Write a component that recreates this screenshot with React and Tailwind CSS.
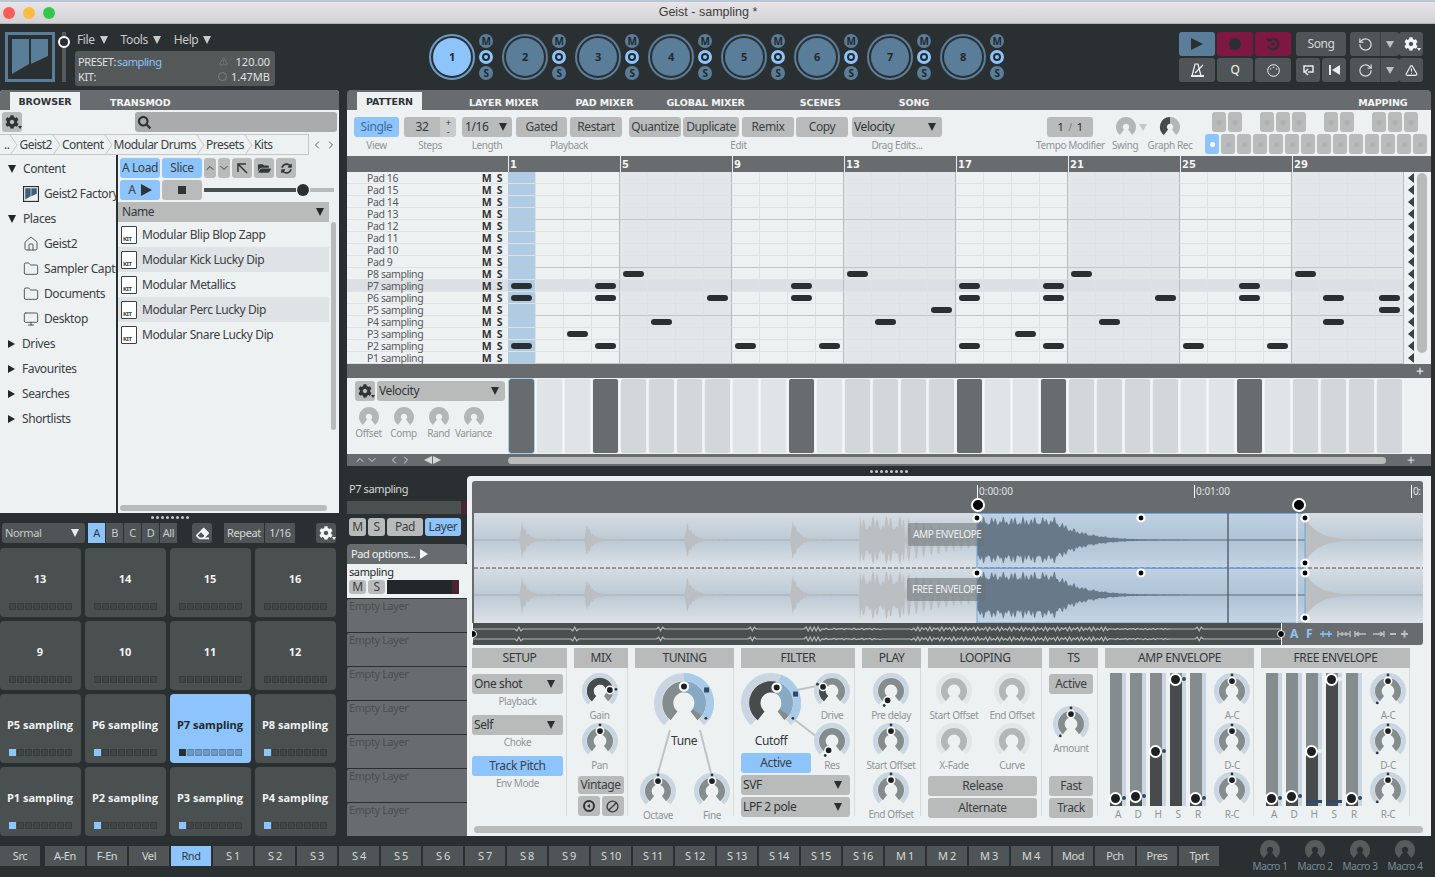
import { FaCog, FaSearch, FaFolderOpen, FaSyncAlt, FaEraser } from 'react-icons/fa';
import { RotateCcw, RotateCw, TriangleAlert, Folder, Monitor, Home, ChevronUp, ChevronDown, ChevronLeft, ChevronRight, Ban, Plus } from 'lucide-react';

const rad = (a) => ((a - 90) * Math.PI) / 180;
const pt = (c, r, a) => [c + r * Math.cos(rad(a)), c + r * Math.sin(rad(a))];
const arc = (c, r, a0, a1) => {
    const [x0, y0] = pt(c, r, a0);
    const [x1, y1] = pt(c, r, a1);
    return `M${x0} ${y0}A${r} ${r} 0 ${a1 - a0 > 180 ? 1 : 0} 1 ${x1} ${y1}`;
};

// generic rotary knob: outer ring + inner track + optional coloured parts
function Knob({ s = 36, ring = '#c9d6e2', track = '#858c8e', outer, inner, handle, dots = [], square, hr }) {
    const c = s / 2;
    const R = s / 2;
    const rOut = R * 0.87;
    const rIn = ring ? R * 0.54 : R * 0.66;
    const wOut = R * 0.26;
    const wIn = ring ? R * 0.37 : R * 0.68;
    const hp = handle !== undefined ? pt(c, R * 0.55, handle) : null;
    const hs = hr || R * 0.17;
    return (
        <svg width={s} height={s} viewBox={`0 0 ${s} ${s}`} className="block shrink-0 overflow-visible">
            {ring && <path d={arc(c, rOut, -138, 138)} fill="none" stroke={ring} strokeWidth={wOut} />}
            {outer && <path d={arc(c, rOut, outer[0], outer[1])} fill="none" stroke="#a9cbea" strokeWidth={wOut} />}
            <path d={arc(c, rIn, -142, 142)} fill="none" stroke={track} strokeWidth={wIn} />
            {(inner || []).map((p, i) => (
                <path key={i} d={arc(c, rIn, p[0], p[1])} fill="none" stroke={p[2]} strokeWidth={wIn} />
            ))}
            {square !== undefined && (
                <rect x={pt(c, rOut, square)[0] - 2.5} y={pt(c, rOut, square)[1] - 2.5} width="5" height="5" fill="#2f4a66" />
            )}
            {dots.map((d, i) => (
                <circle key={i} cx={pt(c, R * 0.89, d)[0]} cy={pt(c, R * 0.89, d)[1]} r="1.4" fill="#26394c" />
            ))}
            {hp && <circle cx={hp[0]} cy={hp[1]} r={hs + 0.6} fill="#1d2021" stroke="#fff" strokeWidth={s > 40 ? 2.2 : 1.5} />}
        </svg>
    );
}

const Lbl = ({ children, className = '' }) => (
    <div className={`text-[10px] leading-[13px] text-[#8e9496] text-center whitespace-nowrap ${className}`}>{children}</div>
);

const KnobCell = ({ label, className = '', ...p }) => (
    <div className={`flex flex-col items-center w-[56px] ${className}`}>
        <Knob {...p} />
        <Lbl>{label}</Lbl>
    </div>
);

const Btn = ({ children, className = '' }) => (
    <div className={`h-5 flex items-center justify-center rounded-[3px] bg-[#b9bbbb] text-[#3b4042] text-[12px] whitespace-nowrap ${className}`}>{children}</div>
);

const Drop = ({ children, className = '' }) => (
    <div className={`h-5 flex items-center justify-between pl-[2px] pr-2 rounded-[3px] bg-[#b9bbbb] text-[#2f3436] text-[12px] whitespace-nowrap ${className}`}>
        <span>{children}</span>
        <span className="w-0 h-0 border-x-[4px] border-x-transparent border-t-[8px] border-t-[#2a3031]" />
    </div>
);

const DarkBtn = ({ children, className = '' }) => (
    <div className={`flex items-center justify-center rounded-[3px] bg-[#4f5556] text-[#d5d8d9] text-[11px] whitespace-nowrap ${className}`}>{children}</div>
);

const Tri = ({ dir = 'down', className = '' }) =>
    dir === 'down' ? (
        <span className={`inline-block w-0 h-0 border-x-[4px] border-x-transparent border-t-[8px] border-t-[#22282a] ${className}`} />
    ) : (
        <span className={`inline-block w-0 h-0 border-y-[4px] border-y-transparent border-l-[7px] border-l-[#22282a] ${className}`} />
    );

function LogoMark({ s = 50, stroke = '#5a7d9a', fill = '#5a7d9a', w = 3 }) {
    return (
        <svg width={s} height={s} viewBox="0 0 50 50" className="block shrink-0">
            <rect x="1.5" y="1.5" width="47" height="47" fill="none" stroke={stroke} strokeWidth={w} />
            <path d="M7 7H24V32L7 42Z" fill={fill} />
            <path d="M26 7H43V24L26 32Z" fill={fill} />
        </svg>
    );
}

const Gear = ({ dark = true }) => (
    <span className="relative inline-flex">
        <FaCog size={14} color={dark ? '#2f3436' : '#f2f4f5'} />
        <span className={`absolute -right-[3px] bottom-0 w-0 h-0 border-x-[2px] border-x-transparent border-t-[3px] ${dark ? 'border-t-[#2f3436]' : 'border-t-[#f2f4f5]'}`} />
    </span>
);

function TitleBar() {
    return (
        <div className="h-6 shrink-0 relative bg-gradient-to-b from-[#e9e7e9] to-[#d3d1d3] border-b border-[#b3b1b3] flex items-center justify-center">
            <div className="absolute left-0 top-0 w-full h-[2px] bg-[#b9c6d6]" />
            <div className="absolute left-[3px] top-[7px] flex gap-2">
                <span className="w-3 h-3 rounded-full bg-[#fc5b57]" />
                <span className="w-3 h-3 rounded-full bg-[#fdbc40]" />
                <span className="w-3 h-3 rounded-full bg-[#34c84a]" />
            </div>
            <span className="font-['Liberation_Sans'] tracking-normal text-[12.5px] text-[#3c3c3c] mt-[2px] -ml-[19px]">Geist - sampling *</span>
        </div>
    );
}

const TrackBtn = ({ n, active }) => (
    <div className="flex items-center w-[73px] shrink-0">
        <div className={`w-[46px] h-[46px] rounded-full border-2 ${active ? 'border-[#6b9cc8]' : 'border-[#5a7d9a]'} flex items-center justify-center`}>
            <div className={`w-[38px] h-[38px] rounded-full flex items-center justify-center text-[11px] font-bold text-[#24292b] ${active ? 'bg-[#8cc4fb]' : 'bg-[#5a7d9a]'}`}>{n}</div>
        </div>
        <div className="flex flex-col gap-[2px] ml-1">
            <span className="w-[14px] h-[14px] rounded-full bg-[#5a7d9a] text-[#24292b] text-[10px] font-bold flex items-center justify-center leading-none">M</span>
            <span className="w-[14px] h-[14px] rounded-full bg-[#8cc4fb] flex items-center justify-center">
                <span className="w-2 h-2 rounded-full border-2 border-[#24292b]" />
            </span>
            <span className="w-[14px] h-[14px] rounded-full bg-[#5a7d9a] text-[#24292b] text-[10px] font-bold flex items-center justify-center leading-none">S</span>
        </div>
    </div>
);

const MenuItem = ({ children }) => (
    <span className="flex items-center gap-[5px]">
        {children}
        <span className="w-0 h-0 border-x-[4px] border-x-transparent border-t-[8px] border-t-[#c8cbcc]" />
    </span>
);

const HistoryBtn = ({ icon }) => (
    <div className="h-6 ml-[5px] -mr-[5px] flex rounded-[3px] overflow-hidden bg-[#4f5556]">
        <span className="w-[31px] flex items-center justify-center border-r border-[#3a3f40] text-[#d5d8d9]">{icon}</span>
        <span className="flex-1 flex items-center justify-center"><span className="w-0 h-0 border-x-[4px] border-x-transparent border-t-[7px] border-t-[#bfc2c3]" /></span>
    </div>
);

function Header() {
    const tb = 'flex items-center justify-center rounded-[3px] h-6';
    return (
        <div className="h-[66px] shrink-0 flex items-start pt-2 pl-[5px] bg-[#2a3031]">
            <LogoMark />
            <div className="relative w-1 h-[50px] bg-[#55595b] ml-[7px]">
                <span className="absolute -left-[4px] top-[4px] w-3 h-3 rounded-full bg-[#2a3031] border-2 border-white" />
            </div>
            <div className="ml-[9px] w-[200px]">
                <div className="h-[15px] flex items-center gap-[13px] pl-[2px] text-[12px] text-[#c8cbcc]">
                    <MenuItem>File</MenuItem>
                    <MenuItem>Tools</MenuItem>
                    <MenuItem>Help</MenuItem>
                </div>
                <div className="mt-1 h-[35px] rounded-[3px] bg-[#545859] px-[3px] text-[11px] text-[#dfe1e2] leading-[15px] flex flex-col justify-center">
                    <div className="flex justify-between">
                        <span>PRESET:<span className="text-[#8cc4fb] ml-[1px]">sampling</span></span>
                        <span className="flex items-center gap-2 pr-[2px] tracking-normal"><TriangleAlert size={9} color="#7d8183" />120.00</span>
                    </div>
                    <div className="flex justify-between">
                        <span>KIT:</span>
                        <span className="flex items-center gap-1 pr-[2px] tracking-normal"><span className="w-[9px] h-[9px] rounded-full border border-[#7d8183]" />1.47MB</span>
                    </div>
                </div>
            </div>
            <div className="flex items-center ml-[154px] h-[50px]">
                {[1, 2, 3, 4, 5, 6, 7, 8].map((n) => <TrackBtn key={n} n={n} active={n === 1} />)}
            </div>
            <div className="ml-[166px] grid grid-cols-[36px_36px_36px_50px_49px_24px] grid-rows-[24px_24px] gap-x-[2px] gap-y-[2px] text-[#d5d8d9]">
                <div className={`${tb} bg-[#5a7d9a]`}><span className="w-0 h-0 border-y-[6px] border-y-transparent border-l-[12px] border-l-[#2a3031]" /></div>
                <div className={`${tb} bg-[#7e1742]`}><span className="w-3 h-3 rounded-full bg-[#2a3031]" /></div>
                <div className={`${tb} bg-[#7e1742]`}>
                    <svg width="14" height="14" viewBox="0 0 14 14" fill="none" stroke="#2a3031" strokeWidth="2"><path d="M3 3.5A5.3 5.3 0 1 1 2 9" /><path d="M1 1.5L3 4L6 3" strokeWidth="1.5" /><circle cx="7" cy="7" r="1.7" fill="#2a3031" stroke="none" /></svg>
                </div>
                <DarkBtn className="h-6 ml-[3px] -mr-[3px] text-[12px]">Song</DarkBtn>
                <HistoryBtn icon={<RotateCcw size={15} />} />
                <DarkBtn className="h-6 ml-[3px] -mr-[3px]"><Gear dark={false} /></DarkBtn>
                <div className={`${tb} bg-[#4f5556]`}>
                    <svg width="15" height="14" viewBox="0 0 15 14"><path d="M2 13L5 1H8L11 13Z" fill="none" stroke="#f2f4f5" strokeWidth="1.2" /><path d="M1 13H14" stroke="#f2f4f5" strokeWidth="1.8" /><path d="M5 10L13 2" stroke="#f2f4f5" strokeWidth="1.2" /></svg>
                </div>
                <div className={`${tb} bg-[#4f5556] text-[12px] text-[#f2f4f5]`}>Q</div>
                <div className={`${tb} bg-[#4f5556]`}>
                    <svg width="13" height="13" viewBox="0 0 13 13" fill="none" stroke="#f2f4f5"><circle cx="6.5" cy="6.5" r="5.8" /><circle cx="6.5" cy="3.2" r="0.7" fill="#f2f4f5" stroke="none" /><circle cx="3.5" cy="5" r="0.7" fill="#f2f4f5" stroke="none" /><circle cx="9.5" cy="5" r="0.7" fill="#f2f4f5" stroke="none" /></svg>
                </div>
                <div className="flex gap-[2px] ml-[3px] -mr-[3px]">
                    <DarkBtn className="h-6 w-6">
                        <svg width="13" height="12" viewBox="0 0 13 12"><path d="M3 8H2V2H11V8H6M6 5L3 8L6 11" fill="none" stroke="#e8eaeb" strokeWidth="1.5" /></svg>
                    </DarkBtn>
                    <DarkBtn className="h-6 w-6">
                        <svg width="12" height="10" viewBox="0 0 12 10"><path d="M1 0H3V10H1ZM12 0V10L4 5Z" fill="#e8eaeb" /></svg>
                    </DarkBtn>
                </div>
                <HistoryBtn icon={<RotateCw size={15} />} />
                <DarkBtn className="h-6 ml-[3px] -mr-[3px]"><TriangleAlert size={13} color="#f2f4f5" /></DarkBtn>
            </div>
        </div>
    );
}

const TabText = ({ children, className = '' }) => (
    <span className={`font-['DejaVu_Sans'] font-bold text-[9.5px] text-[#f3f5f6] tracking-[-0.1px] whitespace-nowrap ${className}`}>{children}</span>
);

const SmallIcon = ({ children, className = '' }) => (
    <div className={`h-5 rounded-[3px] bg-[#b9bbbb] flex items-center justify-center text-[#33383a] ${className}`}>{children}</div>
);

const TreeRow = ({ icon, tri, children, indent }) => (
    <div className={`h-[25px] flex items-center whitespace-nowrap text-[12px] text-[#3b4042] ${indent ? 'pl-[22px]' : 'pl-[8px]'}`}>
        {tri && <Tri dir={tri} className="mr-[7px]" />}
        {icon && <span className="w-[18px] shrink-0 flex justify-center mr-1">{icon}</span>}
        {children}
    </div>
);

const KitIcon = () => (
    <div className="relative w-[16px] h-[18px] border border-[#3b4042] bg-white rounded-[1px] shrink-0">
        <span className="absolute left-[1px] bottom-0 text-[6px] leading-[8px] font-bold text-[#3b4042]">KIT</span>
    </div>
);

function Browser() {
    const crumbs = ['Geist2', 'Content', 'Modular Drums', 'Presets', 'Kits'];
    const files = ['Modular Blip Blop Zapp', 'Modular Kick Lucky Dip', 'Modular Metallics', 'Modular Perc Lucky Dip', 'Modular Snare Lucky Dip'];
    return (
        <div className="h-[423px] rounded-t-[4px] bg-[#eef1f2] flex flex-col overflow-hidden">
            <div className="h-5 shrink-0 bg-[#686c6f] flex items-end pl-[10px]">
                <div className="w-[70px] h-[18px] pt-[2px] bg-[#eef1f2] flex items-center justify-center"><TabText className="!text-[#2f3436]">BROWSER</TabText></div>
                <TabText className="ml-[30px]">TRANSMOD</TabText>
            </div>
            <div className="h-[24px] shrink-0 flex items-center pl-[2px] pr-[2px]">
                <SmallIcon className="w-5"><Gear /></SmallIcon>
                <div className="ml-[113px] flex-1 h-5 rounded-[3px] bg-[#a9abac] flex items-center pl-[3px]"><FaSearch size={13} color="#2a3031" /></div>
            </div>
            <div className="h-[21px] shrink-0 flex items-center">
                <div className="w-[309px] h-[21px] border-y border-r border-[#c4c7c9] flex items-center text-[12px] tracking-[-0.5px] text-[#3b4042] overflow-hidden whitespace-nowrap">
                    <span className="ml-[4px]">..</span>
                    {crumbs.map((c) => (
                        <span key={c} className="flex items-center">
                            <svg width="10" height="20" viewBox="0 0 10 20" className="shrink-0"><path d="M1 0L8 10L1 20" fill="none" stroke="#c4c7c9" /></svg>
                            {c}
                        </span>
                    ))}
                </div>
                <ChevronLeft size={12} className="ml-[2px]" color="#5a5f61" />
                <ChevronRight size={12} className="ml-[2px]" color="#5a5f61" />
            </div>
            <div className="flex-1 flex min-h-0">
                <div className="w-[116px] shrink-0 overflow-hidden pt-[1px]">
                    <TreeRow tri="down">Content</TreeRow>
                    <TreeRow indent icon={<LogoMark s={16} stroke="#2a3031" fill="#3f5e78" w={4} />}>Geist2 Factory</TreeRow>
                    <TreeRow tri="down">Places</TreeRow>
                    <TreeRow indent icon={<Home size={16} strokeWidth={1.2} color="#2f3436" />}>Geist2</TreeRow>
                    <TreeRow indent icon={<Folder size={16} strokeWidth={1.2} color="#2f3436" />}>Sampler Capture</TreeRow>
                    <TreeRow indent icon={<Folder size={16} strokeWidth={1.2} color="#2f3436" />}>Documents</TreeRow>
                    <TreeRow indent icon={<Monitor size={16} strokeWidth={1.2} color="#2f3436" />}>Desktop</TreeRow>
                    <TreeRow tri="right">Drives</TreeRow>
                    <TreeRow tri="right">Favourites</TreeRow>
                    <TreeRow tri="right">Searches</TreeRow>
                    <TreeRow tri="right">Shortlists</TreeRow>
                </div>
                <div className="w-[2px] shrink-0 bg-[#2a3031]" />
                <div className="flex-1 flex flex-col pt-[3px] min-w-0">
                    <div className="flex gap-[2px] pl-[2px] h-5">
                        <Btn className="w-10 !bg-[#8cc4fb]">A Load</Btn>
                        <Btn className="w-10 !bg-[#8cc4fb]">Slice</Btn>
                        <SmallIcon className="w-3"><ChevronUp size={12} /></SmallIcon>
                        <SmallIcon className="w-3"><ChevronDown size={12} /></SmallIcon>
                        <SmallIcon className="w-5"><svg width="12" height="12" viewBox="0 0 12 12"><path d="M2 10V2H10M2 2L11 11" fill="none" stroke="#33383a" strokeWidth="1.5" /></svg></SmallIcon>
                        <SmallIcon className="w-5"><FaFolderOpen size={13} /></SmallIcon>
                        <SmallIcon className="w-5"><FaSyncAlt size={11} /></SmallIcon>
                    </div>
                    <div className="flex gap-[2px] pl-[2px] h-5 mt-[2px] items-center">
                        <Btn className="w-10 !bg-[#8cc4fb] gap-[5px]">A <span className="w-0 h-0 border-y-[6px] border-y-transparent border-l-[11px] border-l-[#2f3436]" /></Btn>
                        <Btn className="w-10"><span className="w-2 h-2 bg-[#2f3436]" /></Btn>
                        <div className="relative w-[130px] h-1 flex">
                            <div className="w-[92px] h-1 bg-[#4a4f50]" />
                            <div className="flex-1 h-1 ml-[14px] bg-[#b9bbbb]" />
                            <span className="absolute left-[93px] -top-1 w-3 h-3 rounded-full bg-[#2a3031]" />
                        </div>
                    </div>
                    <div className="h-5 mt-[2px] w-[211px] bg-[#b9bbbb] flex items-center justify-between pl-1 pr-[5px] text-[12px] text-[#33383a]">Name <Tri /></div>
                    <div className="relative flex-1">
                        {files.map((f, i) => (
                            <div key={f} className={`w-[211px] h-[25px] flex items-center gap-[5px] pl-[3px] text-[12px] text-[#3b4042] whitespace-nowrap ${i % 2 ? 'bg-[#dfe3e6]' : ''}`}>
                                <KitIcon />{f}
                            </div>
                        ))}
                        <div className="absolute left-[213px] top-0 w-[5px] h-[208px] rounded-full bg-[#b9bbbb]" />
                        <div className="absolute left-[2px] bottom-[2px] w-[207px] h-[6px] rounded-full bg-[#b9bbbb]" />
                    </div>
                </div>
            </div>
        </div>
    );
}

const Dots = ({ n = 8 }) => (
    <div className="flex gap-[2px] justify-center">
        {Array.from({ length: n }).map((_, i) => <span key={i} className="w-[3px] h-[3px] rounded-full bg-[#c5c9cb]" />)}
    </div>
);

function Pad({ label, active, first }) {
    return (
        <div className={`h-[69px] rounded-[4px] flex flex-col items-center pt-[24px] ${active ? 'bg-[#8cc4fb]' : 'bg-[#4a4f50]'}`}>
            <span className={`font-['Open_Sans'] font-bold tracking-normal text-[11px] leading-[14px] whitespace-nowrap -ml-[1px] ${active ? 'text-[#22282a]' : 'text-[#f0f2f3]'}`}>{label}</span>
            <div className="flex gap-[1px] mt-[17px] self-start ml-[9px]">
                {Array.from({ length: 8 }).map((_, i) => (
                    <span
                        key={i}
                        className={
                            i === 0 && first
                                ? active ? 'w-[7px] h-[7px] bg-[#2a3031]' : 'w-[7px] h-[7px] bg-[#8cc4fb]'
                                : active ? 'w-[7px] h-[7px] border border-[#5a84ad] bg-[#6f9ac4]' : 'w-[7px] h-[7px] border border-[#383c3d] bg-[#414546]'
                        }
                    />
                ))}
            </div>
        </div>
    );
}

function PadSection() {
    return (
        <div>
            <div className="h-[9px] flex items-center justify-center"><Dots /></div>
            <div className="h-[22px] flex items-center pl-[2px] text-[11px] text-[#c9cccd]">
                <div className="w-[83px] h-5 rounded-[3px] bg-[#4f5556] flex items-center justify-between pl-[3px] pr-[6px]">Normal <span className="w-0 h-0 border-x-[4px] border-x-transparent border-t-[8px] border-t-[#e8eaeb]" /></div>
                <div className="flex gap-[1px] ml-[3px]">
                    <span className="w-[17px] h-5 flex items-center justify-center bg-[#8cc4fb] text-[#33383a]">A</span>
                    {['B', 'C', 'D'].map((t) => <span key={t} className="w-[17px] h-5 flex items-center justify-center bg-[#4f5556]">{t}</span>)}
                    <span className="w-[17px] h-5 flex items-center justify-center bg-[#4f5556]">All</span>
                </div>
                <DarkBtn className="w-5 h-5 ml-[15px]"><FaEraser size={13} color="#f2f4f5" /></DarkBtn>
                <div className="flex gap-[1px] ml-3">
                    <DarkBtn className="w-10 h-5 !rounded-none">Repeat</DarkBtn>
                    <DarkBtn className="w-[30px] h-5 !rounded-none">1/16</DarkBtn>
                </div>
                <DarkBtn className="w-5 h-5 ml-[21px]"><Gear dark={false} /></DarkBtn>
            </div>
            <div className="grid grid-cols-[81px_81px_81px_81px] gap-[4px] mt-[4px]">
                {['13', '14', '15', '16', '9', '10', '11', '12'].map((p) => <Pad key={p} label={p} />)}
                {['P5', 'P6', 'P7', 'P8', 'P1', 'P2', 'P3', 'P4'].map((p) => <Pad key={p} label={`${p} sampling`} active={p === 'P7'} first />)}
            </div>
        </div>
    );
}

function PatternToolbar() {
    const top = [0, 1, -1, 3, 4, 5, -1, 7, 8, -1, 10, 11, 12];
    return (
        <div className="h-[46px] shrink-0 flex bg-[#eef1f2] relative">
            <div className="flex flex-col pl-[7px] shrink-0">
                <div className="flex mt-[7px] h-5">
                    <Btn className="w-[45px] !bg-[#8cc4fb] !text-[#3b6c9a]">Single</Btn>
                    <div className="flex ml-[5px] w-[52px]">
                        <div className="w-[36px] h-5 bg-[#b9bbbb] rounded-l-[3px] text-[12px] flex items-center justify-center text-[#33383a]">32</div>
                        <div className="w-[16px] h-5 bg-[#c9cbcc] rounded-r-[3px] flex flex-col items-center justify-center text-[9px] leading-[9px] text-[#33383a]"><span>+</span><span>-</span></div>
                    </div>
                    <Drop className="w-[50px] ml-[6px] !pr-[5px] !pl-[3px]">1/16</Drop>
                    <Btn className="w-[51px] ml-[4px]">Gated</Btn>
                    <Btn className="w-[52px] ml-[3px]">Restart</Btn>
                    <Btn className="w-[52px] ml-[7px]">Quantize</Btn>
                    <Btn className="w-[56px] ml-[2px]">Duplicate</Btn>
                    <Btn className="w-[52px] ml-[3px]">Remix</Btn>
                    <Btn className="w-[52px] ml-[2px]">Copy</Btn>
                    <Drop className="w-[90px] ml-[4px] !pr-[6px]">Velocity</Drop>
                </div>
                <div className="flex mt-[2px] h-[13px]">
                    <Lbl className="w-[45px]">View</Lbl>
                    <Lbl className="w-[52px] ml-[5px]">Steps</Lbl>
                    <Lbl className="w-[50px] ml-[6px]">Length</Lbl>
                    <Lbl className="w-[106px] ml-[4px]">Playback</Lbl>
                    <Lbl className="w-[219px] ml-[7px]">Edit</Lbl>
                    <Lbl className="w-[90px] ml-[4px]">Drag Edits...</Lbl>
                </div>
            </div>
            <div className="flex flex-col ml-[94px] w-[157px] shrink-0">
                <div className="flex items-center h-5 mt-[7px]">
                    <div className="w-[46px] h-5 ml-[11px] rounded-[3px] bg-[#b9bbbb] text-[11px] text-[#22282a] flex items-center justify-around px-2"><span>1</span><span className="text-[#7f8486]">/</span><span>1</span></div>
                    <span className="ml-[23px]"><Knob s={20} ring={null} track="#b4b7b8" /></span>
                    <span className="ml-[3px] w-0 h-0 border-x-[4px] border-x-transparent border-t-[7px] border-t-[#c5c8c9]" />
                    <span className="ml-[13px]"><Knob s={20} ring={null} track="#b4b7b8" inner={[[-142, 0, '#474b4c']]} /></span>
                </div>
                <div className="flex mt-[2px] h-[13px]">
                    <Lbl className="w-[68px]">Tempo Modifier</Lbl>
                    <Lbl className="w-[26px] ml-[8px]">Swing</Lbl>
                    <Lbl className="w-[46px] ml-[9px]">Graph Rec</Lbl>
                </div>
            </div>
            <div className="ml-[12px] flex flex-col gap-[2px] pt-[2px]">
                <div className="flex gap-[2px] pl-[7px]">
                    {top.map((k, i) => (
                        <span key={i} className={k < 0 ? 'w-[14px] h-5' : 'w-[14px] h-5 rounded-[3px] bg-[#b9bbbb] flex items-center justify-center'}>
                            {k >= 0 && <span className="w-[5px] h-[5px] rounded-full bg-[#adafb0]" />}
                        </span>
                    ))}
                </div>
                <div className="flex gap-[2px]">
                    {Array.from({ length: 14 }).map((_, i) => (
                        <span key={i} className={`w-[14px] h-5 rounded-[3px] flex items-center justify-center ${i === 0 ? 'bg-[#8cc4fb]' : 'bg-[#b9bbbb]'}`}>
                            <span className={`w-[5px] h-[5px] rounded-full ${i === 0 ? 'bg-white' : 'bg-[#adafb0]'}`} />
                        </span>
                    ))}
                </div>
            </div>
        </div>
    );
}

const ROWS = ['Pad 16', 'Pad 15', 'Pad 14', 'Pad 13', 'Pad 12', 'Pad 11', 'Pad 10', 'Pad 9', 'P8 sampling', 'P7 sampling', 'P6 sampling', 'P5 sampling', 'P4 sampling', 'P3 sampling', 'P2 sampling', 'P1 sampling'];
const NOTES = {
    8: [4, 12, 20, 28],
    9: [0, 3, 10, 16, 19, 26],
    10: [0, 3, 7, 10, 16, 19, 23, 26, 29, 31],
    11: [15, 31],
    12: [5, 13, 21, 29],
    13: [2, 18],
    14: [0, 3, 8, 11, 16, 19, 24, 27],
};
const VEL = [0, 3, 10, 16, 19, 26];
const STEPS = Array.from({ length: 32 }, (_, i) => i);

function cellBg(r, c) {
    if (c === 0) return 'bg-[#b0cce4]';
    if (r === 9) return 'bg-[#dce0e4]';
    return Math.floor(c / 4) % 2 ? 'bg-[#e3e6e8]' : 'bg-[#eef1f2]';
}

function Sequencer() {
    return (
        <>
            <div className="h-4 shrink-0 bg-[#686c6f] flex pl-[161px]">
                {[1, 5, 9, 13, 17, 21, 25, 29].map((n) => (
                    <div key={n} className="w-[112px] border-l border-[#e8eaeb] pl-[1px] text-[10px] font-bold font-['DejaVu_Sans'] tracking-normal leading-[17px] text-[#f3f5f6]">{n}</div>
                ))}
            </div>
            <div className="h-[192px] shrink-0 flex bg-[#eef1f2]">
                <div className="w-[161px] shrink-0">
                    {ROWS.map((r, i) => (
                        <div key={r} className={`h-3 flex items-center text-[10.5px] leading-3 text-[#54595b] border-b border-[#dfe2e4] ${i === 9 ? 'bg-[#dce0e4]' : ''}`}>
                            <span className="w-[133px] pl-[20px] whitespace-nowrap">{r}</span>
                            <span className="w-[13px] font-bold text-[#2f3436] text-center">M</span>
                            <span className="w-[13px] font-bold text-[#2f3436] text-center">S</span>
                        </div>
                    ))}
                </div>
                <div className="grid grid-cols-[repeat(32,28px)] grid-rows-[repeat(16,12px)] shrink-0">
                    {ROWS.map((_, r) =>
                        STEPS.map((c) => (
                            <div
                                key={`${r}-${c}`}
                                className={`flex items-center justify-center border-r ${c % 4 === 3 ? 'border-r-[#b7bbbd]' : 'border-r-[#dfe2e4]'} border-b ${r % 4 === 3 ? 'border-b-[#c2c6c8]' : 'border-b-[#dfe2e4]'} ${cellBg(r, c)}`}
                            >
                                {NOTES[r]?.includes(c) && <span className="w-[21px] h-[6px] rounded-full bg-[#2a3031]" />}
                            </div>
                        ))
                    )}
                </div>
                <div className="w-[4px] shrink-0" />
                <div className="w-[6px] flex flex-col items-start bg-[#eef1f2]">
                    {Array.from({ length: 16 }).map((_, i) => (
                        <span key={i} className="h-3 flex items-center"><span className="w-0 h-0 border-y-[5px] border-y-transparent border-r-[6px] border-r-[#3b4042]" /></span>
                    ))}
                </div>
                <div className="flex-1 bg-[#eef1f2] pl-[3px] pt-[1px]">
                    <div className="w-[10px] h-[180px] rounded-full bg-[#b9bbbb]" />
                </div>
            </div>
            <div className="h-[14px] shrink-0 bg-[#686c6f] flex justify-end items-center pr-[6px]"><Plus size={10} color="#e8eaeb" strokeWidth={3} /></div>
        </>
    );
}

function Velocity() {
    return (
        <>
            <div className="h-[76px] shrink-0 bg-[#eef1f2] flex">
                <div className="w-[161px] shrink-0 pl-[8px] pt-[3px]">
                    <div className="flex gap-[2px]">
                        <SmallIcon className="w-5"><Gear /></SmallIcon>
                        <Drop className="w-[128px] !pr-[6px]">Velocity</Drop>
                    </div>
                    <div className="flex mt-[6px] -ml-[4px]">
                        {['Offset', 'Comp', 'Rand', 'Variance'].map((l) => (
                            <div key={l} className="w-[35px] flex flex-col items-center">
                                <Knob s={20} ring={null} track="#b4b7b8" />
                                <Lbl>{l}</Lbl>
                            </div>
                        ))}
                    </div>
                </div>
                <div className="grid grid-cols-[repeat(32,28px)] py-[1px]">
                    {STEPS.map((c) => (
                        <div key={c} className="px-[1px] border-r border-[#f6f8f8]">
                            <div className={`h-full rounded-[2px] ${VEL.includes(c) ? 'bg-[#686c6f]' : Math.floor(c / 4) % 2 ? 'bg-[#d4d7d9]' : 'bg-[#e1e4e6]'} ${c === 0 ? 'outline outline-1 outline-[#a9cbea]' : ''}`} />
                        </div>
                    ))}
                </div>
            </div>
            <div className="flex-1 bg-[#686c6f] flex items-center text-[#d5d8d9] rounded-b-[4px]">
                <div className="w-[161px] flex items-center pl-[7px]">
                    <ChevronUp size={12} /><ChevronDown size={12} />
                    <ChevronLeft size={12} className="ml-[10px]" /><ChevronRight size={12} />
                    <span className="ml-[12px] w-0 h-0 border-y-[4px] border-y-transparent border-r-[8px] border-r-[#d5d8d9]" />
                    <span className="ml-[1px] w-0 h-0 border-y-[4px] border-y-transparent border-l-[8px] border-l-[#d5d8d9]" />
                </div>
                <div className="w-[878px] h-[7px] rounded-full bg-[#b9bbbb]" />
                <Plus size={10} strokeWidth={3} className="ml-5" />
            </div>
        </>
    );
}

function PatternPanel() {
    const tabs = [['LAYER MIXER', 'ml-[47px]'], ['PAD MIXER', 'ml-[37px]'], ['GLOBAL MIXER', 'ml-[33px]'], ['SCENES', 'ml-[55px]'], ['SONG', 'ml-[58px]'], ['MAPPING', 'ml-[429px]']];
    return (
        <div className="h-[376px] flex flex-col rounded-t-[4px] overflow-hidden bg-[#686c6f]">
            <div className="h-5 shrink-0 flex items-end pl-[10px]">
                <div className="w-[65px] h-[18px] pt-[2px] bg-[#eef1f2] flex items-center justify-center"><TabText className="!text-[#2f3436]">PATTERN</TabText></div>
                {tabs.map(([t, m]) => <TabText key={t} className={m}>{t}</TabText>)}
            </div>
            <PatternToolbar />
            <Sequencer />
            <Velocity />
        </div>
    );
}

function LayerColumn() {
    return (
        <div className="w-[120px] shrink-0 flex flex-col text-[11px]">
            <div className="h-[25px] pt-[6px] pl-[2px] text-[#d5d8d9] leading-[14px]">P7 sampling</div>
            <div className="h-[13px] bg-[#4a4f50] flex justify-end"><span className="w-[6px] bg-[#4b2433]" /></div>
            <div className="flex gap-[2px] mt-1 pl-[2px] h-[18px]">
                <Btn className="w-[17px] !h-[18px]">M</Btn>
                <Btn className="w-[17px] !h-[18px]">S</Btn>
                <Btn className="w-[36px] !h-[18px]">Pad</Btn>
                <Btn className="w-[36px] !h-[18px] !bg-[#8cc4fb]">Layer</Btn>
            </div>
            <div className="h-5 mt-2 rounded-t-[4px] rounded-br-[4px] bg-[#686c6f] flex items-center gap-1 pl-[4px] text-[#f3f5f6]">Pad options... <span className="w-0 h-0 border-y-[5px] border-y-transparent border-l-[8px] border-l-[#f3f5f6]" /></div>
            <div className="h-[34px] bg-[#eef1f2] pl-[2px] pt-[1px] text-[#22282a] leading-[14px]">
                sampling
                <div className="flex gap-[2px] mt-[1px] items-center">
                    <Btn className="w-[17px] !h-[14px]">M</Btn>
                    <Btn className="w-[17px] !h-[14px]">S</Btn>
                    <div className="w-[72px] h-[14px] bg-[#22282a] flex justify-end"><span className="w-[7px] bg-[#4b2433]" /></div>
                </div>
            </div>
            {Array.from({ length: 7 }).map((_, i) => (
                <div key={i} className="h-[34px] bg-[#686c6f] border-t border-[#2a3031] rounded-tl-[3px] pl-[2px] text-[#4a4f50] leading-[13px]">Empty Layer</div>
            ))}
        </div>
    );
}

// waveform shape, all x in page px
const BURSTS = [[522, 19, 6], [587, 17, 6], [687, 18, 7], [793, 22, 6], [1305, 22, 13]];
function envelope(x) {
    let e = 0;
    BURSTS.forEach(([b, a, d]) => {
        if (x >= b - 3) e = Math.max(e, x < b ? a * (1 - (b - x) / 3) : a * Math.exp(-(x - b) / d));
        // low squiggle after each hit
        if (x >= b && x < b + 45) e = Math.max(e, 3 * Math.abs(Math.sin(x * 0.45)) * (1 - (x - b) / 45));
    });
    // grey lead-in: solid block that falls apart into separate spikes
    if (x >= 860 && x < 977) {
        const comb = x < 905 ? 0.4 + 0.6 * Math.abs(Math.sin(x * 0.7) * Math.cos(x * 0.23)) : 0.1 + 0.9 * Math.abs(Math.sin(x * 0.42)) ** 3;
        e = Math.max(e, 25 * Math.exp(-Math.max(0, x - 900) / 70) * comb);
    } else if (x >= 977) {
        const teeth = 0.62 + 0.38 * Math.abs(Math.sin(x * 0.8) * Math.cos(x * 0.31));
        e = Math.max(e, (x < 1055 ? 24 : 24 * Math.exp(-(x - 1055) / 27)) * teeth);
    } else {
        e *= 0.6 + 0.4 * Math.abs(Math.sin(x * 0.93));
    }
    return e;
}
function wavePath(cy, w0, w1) {
    const up = [];
    const down = [];
    for (let x = w0; x <= w1; x += 1) {
        const e = envelope(x);
        up.push(`${x - 472} ${(cy - e).toFixed(1)}`);
        down.unshift(`${x - 472} ${(cy + e).toFixed(1)}`);
    }
    return `M${up.join('L')}L${down.join('L')}Z`;
}
function stripLine(y) {
    const pts = [];
    for (let x = 0; x <= 810; x += 2) {
        let a = 0;
        [44, 99, 186, 278, 725].forEach((b) => { if (x >= b && x < b + 6) a = 1.8; });
        if (x > 333 && x < 410) a = x < 350 ? 2 : 0.7 * Math.abs(Math.sin(x / 3));
        if (x > 438 && x < 640) a = 1.6 * Math.abs(Math.sin(x * 1.3)) + 0.4;
        if (x > 640 && x < 700) a = 0.6 * Math.abs(Math.sin(x / 3));
        pts.push(`${x} ${(y + (x % 4 ? -a : a)).toFixed(1)}`);
    }
    return pts.join(' ');
}

const Handle = ({ x, y, r = 3.5 }) => <circle cx={x} cy={y} r={r} fill="#000" stroke="#fff" strokeWidth="2.2" />;

function WaveDisplay() {
    return (
        <div className="w-[951px] h-[164px] rounded-[3px] bg-[#686c6f] overflow-hidden flex flex-col shrink-0">
            <div className="h-[32px] shrink-0 relative text-[10px] text-[#e1e3e4]">
                <div className="absolute left-[505px] top-[4px] h-[13px] border-l border-white pl-[1px] leading-[13px] tracking-normal">0:00:00</div>
                <div className="absolute left-[722px] top-[4px] h-[13px] border-l border-white pl-[1px] leading-[13px] tracking-normal">0:01:00</div>
                <div className="absolute left-[939px] top-[4px] h-[13px] border-l border-white pl-[1px] leading-[13px]">0:</div>
                <span className="absolute left-[505px] top-[17px] w-[10px] h-[10px] -ml-[6px] rounded-full bg-black border-2 border-white box-content" />
                <span className="absolute left-[826px] top-[17px] w-[10px] h-[10px] -ml-[6px] rounded-full bg-black border-2 border-white box-content" />
            </div>
            <div className="relative h-[110px] shrink-0">
                <svg width="951" height="110" viewBox="0 0 951 110" className="block">
                    <defs>
                        <linearGradient id="ch" x1="0" y1="0" x2="0" y2="1">
                            <stop offset="0" stopColor="#d6dce2" />
                            <stop offset="0.5" stopColor="#bccad5" />
                            <stop offset="1" stopColor="#dde2e7" />
                        </linearGradient>
                        <linearGradient id="sel" x1="0" y1="0" x2="0" y2="1">
                            <stop offset="0" stopColor="#bfd1e2" />
                            <stop offset="0.5" stopColor="#aec3d7" />
                            <stop offset="1" stopColor="#c5d5e4" />
                        </linearGradient>
                    </defs>
                    <rect x="2" y="0" width="949" height="55" fill="url(#ch)" />
                    <rect x="2" y="55" width="949" height="55" fill="url(#ch)" />
                    <rect x="505" y="0" width="328" height="55" fill="url(#sel)" />
                    <rect x="505" y="55" width="328" height="55" fill="url(#sel)" />
                    <line x1="2" y1="55" x2="951" y2="55" stroke="#4a4f50" strokeDasharray="4 2" />
                    {[27, 82].map((cy) => (
                        <g key={cy}>
                            <line x1="2" y1={cy} x2="951" y2={cy} stroke="#a8abad" />
                            <path d={wavePath(cy, 476, 976)} fill="#bcbfc1" />
                            <path d={wavePath(cy, 1305, 1423)} fill="#bcbfc1" />
                            <line x1="505" y1={cy} x2="833" y2={cy} stroke="#7d8c99" strokeWidth="1.5" />
                            <path d={wavePath(cy, 977, 1300)} fill="#687a8a" />
                        </g>
                    ))}
                    <rect x="505" y="0.5" width="328" height="55" fill="none" stroke="#6fa5d8" />
                    <rect x="505" y="55" width="328" height="55" fill="none" stroke="#6fa5d8" />
                    <line x1="756" y1="0" x2="756" y2="110" stroke="#58646e" strokeWidth="1.5" />
                    <line x1="825" y1="0" x2="825" y2="110" stroke="#eef1f2" strokeWidth="1.5" />
                    {[[505, 5], [669, 5], [833, 5], [833, 50], [505, 60], [669, 60], [833, 60], [833, 105]].map(([x, y]) => (
                        <Handle key={`${x}-${y}`} x={x} y={y} />
                    ))}
                </svg>
                <div className="absolute left-[436px] top-[10px] w-[76px] h-[23px] rounded-[2px] bg-[#6c7277]/55 text-[10px] text-[#eef1f2] leading-[23px] pl-[5px] whitespace-nowrap">AMP ENVELOPE</div>
                <div className="absolute left-[435px] top-[65px] w-[79px] h-[23px] rounded-[2px] bg-[#6c7277]/55 text-[10px] text-[#eef1f2] leading-[23px] pl-[5px] whitespace-nowrap">FREE ENVELOPE</div>
            </div>
            <div className="h-[22px] flex shrink-0">
                <div className="w-[810px] h-full bg-[#4a4f50] relative shrink-0 border-x border-white">
                    <svg width="808" height="22" viewBox="0 0 810 22" className="block">
                        <polyline points={stripLine(6)} fill="none" stroke="#b5b8ba" strokeWidth="1.2" />
                        <polyline points={stripLine(16)} fill="none" stroke="#b5b8ba" strokeWidth="1.2" />
                    </svg>
                    <span className="absolute -left-[4px] top-[7px] w-2 h-2 rounded-full bg-black border border-white" />
                    <span className="absolute -right-[4px] top-[7px] w-2 h-2 rounded-full bg-black border border-white" />
                </div>
                <div className="flex-1 flex items-center pl-2 gap-[5px] text-[#8cc4fb]">
                    <span className="font-bold text-[12px]">A</span>
                    <span className="font-bold text-[12px] ml-[3px]">F</span>
                    <svg width="88" height="10" viewBox="0 0 88 10" className="ml-[3px]" fill="none" stroke="#b9c0c4" strokeWidth="1.4">
                        <path d="M0 5H12M3 2V8M9 2V8" stroke="#8cc4fb" />
                        <path d="M18 2V8M30 2V8M19 5H29M22 3V7M26 3V7" />
                        <path d="M35 2V8M36 5H46M39 3L36 5L39 7" />
                        <path d="M53 5H63M64 2V8M60 3L63 5L60 7" />
                        <path d="M70 5H76" strokeWidth="2" />
                        <path d="M81 5H88M84.5 1.5V8.5" strokeWidth="2" />
                    </svg>
                </div>
            </div>
        </div>
    );
}

const Section = ({ title, w, children, className = '' }) => (
    <div className={`${w} shrink-0 flex flex-col`}>
        <div className="h-5 bg-[#b9bbbb] text-[12px] text-[#33383a] leading-5 text-center">{title}</div>
        <div className={`h-[148px] relative ${className}`}>{children}</div>
    </div>
);

const Line = ({ path }) => (
    <svg width="100%" height="100%" className="absolute inset-0 pointer-events-none" fill="none" stroke="#bfc3c5" strokeWidth="2"><path d={path} /></svg>
);

const plain = { handle: 0, dots: [0] };
const modDot = { handle: 0, dots: [0, -138] };

function Slider({ h, dot = '#2f4a66', bar }) {
    return (
        <div className="relative w-4 h-[133px] flex shrink-0">
            <div className="w-3 h-full bg-[#858c8e] flex flex-col justify-end"><div className="w-full bg-[#474b4c] h-[var(--h)]" style={{ '--h': `${h}px` }} /></div>
            <div className="w-1 h-full bg-[#c9d6e2]" />
            {bar && <div className="absolute left-0 bottom-[3px] w-4 h-[3px] bg-[#2f4a66]" />}
            <span className="absolute -left-[1px] w-[13px] h-[13px] rounded-full bg-[#1d2021] border-2 border-white bottom-[var(--b)]" style={{ '--b': `${h - 7}px` }} />
            <span className="absolute left-3 w-1 h-1 rounded-full bottom-[var(--d)]" style={{ '--d': `${h - 2}px`, background: dot }} />
        </div>
    );
}

function Envelope({ title, values, free }) {
    return (
        <Section title={title} w="w-[149px]" className="border-r border-[#d8dbdd] flex pt-[5px] pl-[5px]">
            <div className="w-[100px] shrink-0">
                <div className="flex gap-1">
                    {values.map((v, i) => <Slider key={i} h={v} bar={free && (i === 2 || i === 3)} dot={free && (i === 2 || i === 3) ? '#eef1f2' : '#2f4a66'} />)}
                </div>
                <div className="flex gap-1 mt-[2px]">
                    {['A', 'D', 'H', 'S', 'R'].map((l) => <Lbl key={l} className="w-4">{l}</Lbl>)}
                </div>
            </div>
            <div className="flex flex-col -ml-[6px]">
                <KnobCell label="A-C" {...(free ? modDot : plain)} />
                <KnobCell label="D-C" className="mt-[1px]" {...(free ? modDot : plain)} />
                <KnobCell label="R-C" {...(free ? modDot : plain)} />
            </div>
        </Section>
    );
}

function Controls() {
    const off = { ring: '#e3e5e6', track: '#b4b7b8' };
    return (
        <div className="flex gap-[7px] mt-[3px]">
            <Section title="SETUP" w="w-[95px]" className="border-r border-[#d8dbdd] pt-[6px]">
                <Drop className="w-[91px]">One shot</Drop>
                <Lbl className="w-[91px] mt-[1px] mb-[7px]">Playback</Lbl>
                <Drop className="w-[91px]">Self</Drop>
                <Lbl className="w-[91px] mt-[1px] mb-[7px]">Choke</Lbl>
                <Btn className="w-[91px] !bg-[#8cc4fb]">Track Pitch</Btn>
                <Lbl className="w-[91px] mt-[1px]">Env Mode</Lbl>
            </Section>
            <Section title="MIX" w="w-[54px]" className="border-r border-[#d8dbdd] pt-[5px] flex flex-col items-center">
                <KnobCell label="Gain" className="-ml-[2px]" inner={[[-142, 84, '#474b4c']]} handle={84} dots={[84]} />
                <KnobCell label="Pan" className="mt-[1px] -ml-[2px]" {...plain} />
                <Btn className="w-[46px] mt-[4px]">Vintage</Btn>
                <div className="flex gap-[2px] mt-[2px]">
                    <Btn className="w-[22px]"><span className="w-3 h-3 rounded-full border-2 border-[#2f3436] flex items-center justify-center"><span className="w-0 h-0 border-y-[2px] border-y-transparent border-r-[3px] border-r-[#2f3436]" /></span></Btn>
                    <Btn className="w-[22px]"><Ban size={13} strokeWidth={2.5} className="-scale-x-100" /></Btn>
                </div>
            </Section>
            <Section title="TUNING" w="w-[99px]" className="border-r border-[#d8dbdd] pt-[5px] flex flex-col items-center">
                <Line path="M35 62L23 105M65 62L76 105" />
                <div className="relative flex flex-col items-center">
                    <Knob s={60} outer={[0, 125]} inner={[[0, 125, '#88a9c4']]} handle={0} square={60} dots={[125]} hr={3.5} />
                    <div className="text-[12px] text-[#33383a] leading-[13px] mt-[1px]">Tune</div>
                </div>
                <div className="relative flex w-[108px] justify-between mt-[26px] ml-[2px]">
                    <KnobCell label="Octave" {...plain} />
                    <KnobCell label="Fine" {...plain} />
                </div>
            </Section>
            <Section title="FILTER" w="w-[114px]" className="border-r border-[#d8dbdd] pt-[5px]">
                <Line path="M56 22L76 18M54 52L76 69" />
                <div className="relative flex">
                    <div className="w-[70px] flex flex-col shrink-0">
                        <div className="w-[60px] flex flex-col items-center">
                            <Knob s={60} outer={[20, 125]} inner={[[-142, 20, '#474b4c'], [20, 125, '#88a9c4']]} handle={20} square={70} dots={[125]} hr={3.5} />
                            <div className="text-[12px] text-[#33383a] leading-[13px] mt-[1px]">Cutoff</div>
                        </div>
                        <Btn className="w-[70px] !bg-[#8cc4fb] mt-[6px]">Active</Btn>
                    </div>
                    <div className="flex flex-col -ml-[7px]">
                        <KnobCell label="Drive" inner={[[-142, -65, '#474b4c']]} handle={-65} dots={[-65]} />
                        <KnobCell label="Res" className="mt-[1px]" handle={-160} dots={[-155]} />
                    </div>
                </div>
                <Drop className="w-[109px] mt-[2px]">SVF</Drop>
                <Drop className="w-[109px] mt-[2px]">LPF 2 pole</Drop>
            </Section>
            <Section title="PLAY" w="w-[59px]" className="border-r border-[#d8dbdd] pt-[5px] flex flex-col items-center">
                <KnobCell label="Pre delay" handle={-160} dots={[-155]} />
                <KnobCell label="Start Offset" className="mt-[1px]" {...plain} />
                <KnobCell label="End Offset" {...plain} />
            </Section>
            <Section title="LOOPING" w="w-[114px]" className="border-r border-[#d8dbdd] pt-[5px]">
                <div className="grid grid-cols-[58px_52px] gap-y-[1px]">
                    <KnobCell label="Start Offset" {...off} className="!w-[52px]" />
                    <KnobCell label="End Offset" {...off} className="-ml-[2px]" />
                    <KnobCell label="X-Fade" {...off} className="!w-[52px]" />
                    <KnobCell label="Curve" {...off} className="-ml-[2px]" />
                </div>
                <Btn className="w-[109px] mt-[4px]">Release</Btn>
                <Btn className="w-[109px] mt-[2px]">Alternate</Btn>
            </Section>
            <Section title="TS" w="w-[49px]" className="border-r border-[#d8dbdd] pt-[6px]">
                <Btn className="w-[44px]">Active</Btn>
                <div className="w-[44px] flex justify-center mt-[12px]"><KnobCell label="Amount" {...modDot} /></div>
                <Btn className="w-[44px] mt-[21px]">Fast</Btn>
                <Btn className="w-[44px] mt-[2px]">Track</Btn>
            </Section>
            <Envelope title="AMP ENVELOPE" values={[8, 10, 55, 127, 8]} />
            <Envelope title="FREE ENVELOPE" free values={[8, 10, 55, 127, 8]} />
        </div>
    );
}

function Editor() {
    return (
        <div className="flex-1 bg-[#eef1f2] rounded-tl-[4px] pl-[5px] pt-[5px] overflow-hidden">
            <WaveDisplay />
            <Controls />
            <div className="ml-[2px] w-[949px] h-[7px] rounded-full bg-[#b9bbbb] mt-[10px]" />
        </div>
    );
}

function BottomBar() {
    const labels = ['Src', 'A-En', 'F-En', 'Vel', 'Rnd'];
    for (let i = 1; i <= 16; i++) labels.push(`S ${i}`);
    for (let i = 1; i <= 4; i++) labels.push(`M ${i}`);
    labels.push('Mod', 'Pch', 'Pres', 'Tprt');
    return (
        <div className="h-[41px] shrink-0 flex pt-[10px] overflow-hidden">
            <div className="flex gap-[2px]">
                {labels.map((l) => (
                    <div key={l} className={`w-10 h-5 flex items-center justify-center text-[11px] ${l === 'Src' ? 'mr-[3px]' : ''} ${l === 'Rnd' ? 'bg-[#8cc4fb] text-[#33383a]' : 'bg-[#4f5556] text-[#d5d8d9]'}`}>{l}</div>
                ))}
            </div>
            <div className="flex gap-[5px] ml-[31px] -mt-[6px]">
                {[1, 2, 3, 4].map((n) => (
                    <div key={n} className="w-10 flex flex-col items-center">
                        <Knob s={20} ring={null} track="#565b5c" />
                        <span className="text-[10px] leading-[12px] text-[#7a8d9c] whitespace-nowrap">Macro {n}</span>
                    </div>
                ))}
            </div>
        </div>
    );
}

export default function App() {
    return (
        <div className="w-[1435px] h-[877px] overflow-hidden bg-[#2a3031] flex flex-col font-['Noto_Sans',sans-serif] tracking-[-0.4px]">
            <TitleBar />
            <Header />
            <div className="flex h-[746px] shrink-0">
                <div className="w-[339px] shrink-0">
                    <Browser />
                    <PadSection />
                </div>
                <div className="w-[1084px] ml-2 shrink-0 flex flex-col">
                    <PatternPanel />
                    <div className="h-[10px] flex items-center justify-center"><Dots /></div>
                    <div className="flex h-[360px]">
                        <LayerColumn />
                        <Editor />
                    </div>
                </div>
            </div>
            <BottomBar />
        </div>
    );
}
